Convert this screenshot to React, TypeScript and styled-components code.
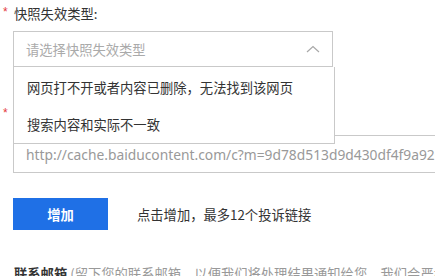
import React from "react";
import styled, { createGlobalStyle } from "styled-components";

const Global = createGlobalStyle`
  html, body {
    margin: 0;
    padding: 0;
    background: #fff;
    overflow: hidden;
  }
  body {
    font-family: "Noto Sans CJK SC", "Noto Sans", sans-serif;
    font-size: 13.3px;
    color: #333;
  }
`;

const Page = styled.div`
  width: 435px;
  height: 276px;
  overflow: hidden;
  padding: 4px 0 0 3px;
  box-sizing: border-box;
`;

const Field = styled.div<{ $top: number }>`
  margin-top: ${(p) => p.$top}px;
`;

const Label = styled.div`
  display: flex;
  align-items: center;
  height: 20px;
  line-height: 20px;
  white-space: nowrap;
  color: #333;
`;

const Required = styled.span`
  width: 11px;
  color: #e4393c;
  font-family: "Liberation Sans", sans-serif;
  font-size: 12px;
  position: relative;
  top: -2px;
`;

const Control = styled.div<{ $gap: number }>`
  margin: ${(p) => p.$gap}px 0 0 10px;
`;

const SelectWrap = styled.div`
  position: relative;
  width: 320px;
  z-index: 2;
`;

const SelectBox = styled.div`
  height: 36px;
  box-sizing: border-box;
  border: 1px solid #c9c9c9;
  display: flex;
  align-items: center;
  justify-content: space-between;
  padding: 0 12px 0 12px;
  color: #aaa;
  background: #fff;
`;

const Menu = styled.ul`
  position: absolute;
  top: 100%;
  left: 0;
  width: 322px;
  margin: 0;
  padding: 2px 0 0 0;
  list-style: none;
  box-sizing: border-box;
  border: 1px solid #c9c9c9;
  border-top: none;
  background: #fff;
`;

const MenuItem = styled.li`
  height: 37px;
  line-height: 37px;
  padding-left: 13px;
  color: #333;
  white-space: nowrap;
`;

const Input = styled.div`
  width: 560px;
  height: 38px;
  box-sizing: border-box;
  border: 1px solid #c9c9c9;
  display: flex;
  align-items: center;
  padding-left: 12px;
  font-family: "Noto Sans", "Open Sans", sans-serif;
  font-size: 13.8px;
  color: #999;
  white-space: nowrap;
  overflow: hidden;
`;

const ActionRow = styled.div`
  display: flex;
  align-items: center;
  gap: 29px;
  margin: 25px 0 0 10px;
`;

const Button = styled.button`
  width: 95px;
  height: 32px;
  border: none;
  border-radius: 0;
  background: #1f70e6;
  color: #fff;
  font-family: "Noto Sans CJK SC", sans-serif;
  font-size: 13.3px;
  font-weight: 700;
  padding: 0;
`;

const Hint = styled.span`
  color: #333;
  white-space: nowrap;
`;

const Footer = styled.div`
  margin: 34px 0 0 11px;
  line-height: 20px;
  white-space: nowrap;
`;

const Strong = styled.span`
  font-weight: 700;
  color: #333;
`;

const Muted = styled.span`
  color: #999;
`;

const Chevron = () => (
  <svg width="14" height="8" viewBox="0 0 14 8">
    <polyline points="1,7 7,1.5 13,7" fill="none" stroke="#a8a8a8" strokeWidth="1.2" />
  </svg>
);

export default function App() {
  return (
    <>
      <Global />
      <Page>
        <Field $top={0}>
          <Label>
            <Required>*</Required>快照失效类型:
          </Label>
          <Control $gap={7}>
            <SelectWrap>
              <SelectBox>
                请选择快照失效类型
                <Chevron />
              </SelectBox>
              <Menu>
                <MenuItem>网页打不开或者内容已删除，无法找到该网页</MenuItem>
                <MenuItem>搜索内容和实际不一致</MenuItem>
              </Menu>
            </SelectWrap>
          </Control>
        </Field>
        <Field $top={38}>
          <Label>
            <Required>*</Required>快照链接:
          </Label>
          <Control $gap={10}>
            <Input>
              http://cache.baiducontent.com/c?m=9d78d513d9d430df4f9a9262bae2c0d9d7b8e6fe5af7ffb35d6d8d6ae0c0e
            </Input>
          </Control>
        </Field>
        <ActionRow>
          <Button>增加</Button>
          <Hint>点击增加，最多12个投诉链接</Hint>
        </ActionRow>
        <Footer>
          <Strong>联系邮箱</Strong>
          <Muted> (留下您的联系邮箱，以便我们将处理结果通知给您，我们会严格保密)</Muted>
        </Footer>
      </Page>
    </>
  );
}
